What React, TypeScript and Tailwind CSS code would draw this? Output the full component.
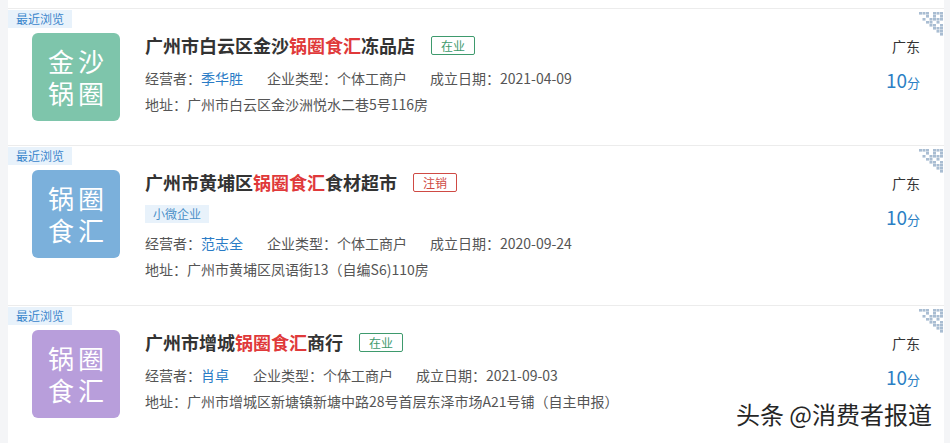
import React from 'react';

type Company = {
  logo: [string, string];
  logoColor: string;
  prefix: string;
  suffix: string;
  status: '在业' | '注销';
  tag?: string;
  owner: string;
  date: string;
  address: string;
  height: string;
};

const companies: Company[] = [
  {
    logo: ['金沙', '锅圈'],
    logoColor: 'bg-[#7ec5ab]',
    prefix: '广州市白云区金沙',
    suffix: '冻品店',
    status: '在业',
    owner: '季华胜',
    date: '2021-04-09',
    address: '地址：广州市白云区金沙洲悦水二巷5号116房',
    height: 'h-[137px]',
  },
  {
    logo: ['锅圈', '食汇'],
    logoColor: 'bg-[#7bb0db]',
    prefix: '广州市黄埔区',
    suffix: '食材超市',
    status: '注销',
    tag: '小微企业',
    owner: '范志全',
    date: '2020-09-24',
    address: '地址：广州市黄埔区凤语街13（自编S6)110房',
    height: 'h-[160px]',
  },
  {
    logo: ['锅圈', '食汇'],
    logoColor: 'bg-[#b89edb]',
    prefix: '广州市增城',
    suffix: '商行',
    status: '在业',
    owner: '肖卓',
    date: '2021-09-03',
    address: '地址：广州市增城区新塘镇新塘中路28号首层东泽市场A21号铺（自主申报）',
    height: 'h-[140px]',
  },
];

// little pixel triangle in the card corner (qr code hint)
const QrCorner: React.FC = () => {
  const cells: [number, number][] = [];
  const pattern = [
    '1110111',
    '0010101',
    '0101111',
    '0011010',
    '0001101',
    '0000111',
    '0000011',
    '0000001',
  ];
  pattern.forEach((row, y) =>
    row.split('').forEach((c, x) => {
      if (c === '1') cells.push([x, y]);
    })
  );
  return (
    <svg width="26" height="26" viewBox="0 0 26 26" className="absolute right-0 top-[2px]">
      {cells.map(([x, y], i) => (
        <rect key={i} x={x * 3.5 + 1} y={y * 3 + 1} width="3" height="2.6" fill="#a9bdd2" />
      ))}
    </svg>
  );
};

const Card: React.FC<{ c: Company; last?: boolean }> = ({ c, last }) => (
  <div className={`relative border-t border-[#ececec] bg-white ${c.height}`}>
    <QrCorner />
    <div className="mt-[1px] h-[18px] w-fit bg-[#e8f2fb] px-[8px] text-[12px] leading-[18px] text-[#3a86cc]">
      最近浏览
    </div>
    <div className="mt-[5px] flex">
      <div
        className={`ml-[24px] flex h-[88px] w-[88px] shrink-0 flex-col items-center justify-center rounded-[6px] ${c.logoColor} text-[26px] leading-[32px] tracking-[4px] text-white`}
      >
        <span className="pl-[4px]">{c.logo[0]}</span>
        <span className="pl-[4px]">{c.logo[1]}</span>
      </div>
      <div className="ml-[25px] flex-1">
        <div className="flex items-center">
          <span className="text-[18px] font-bold leading-[24px] text-[#333]">
            {c.prefix}
            <span className="text-[#e0393a]">锅圈食汇</span>
            {c.suffix}
          </span>
          <span
            className={`ml-[16px] h-[19px] rounded-[2px] border px-[9px] text-[12px] leading-[17px] ${
              c.status === '在业' ? 'border-[#3e9a6d] text-[#3e9a6d]' : 'border-[#cf4a44] text-[#cf4a44]'
            }`}
          >
            {c.status}
          </span>
        </div>
        {c.tag && (
          <div className="mt-[11px] h-[18px] w-fit bg-[#e8f2fb] px-[8px] text-[12px] leading-[18px] text-[#4a8fc8]">
            {c.tag}
          </div>
        )}
        <div className={`${c.tag ? 'mt-[10px]' : 'mt-[11px]'} flex text-[14px] leading-[20px] text-[#555]`}>
          <span className="mr-[24px]">
            经营者：<span className="text-[#2a7cc6]">{c.owner}</span>
          </span>
          <span className="mr-[23px]">企业类型：个体工商户</span>
          <span>成立日期：{c.date}</span>
        </div>
        <div className="mt-[6px] text-[14px] leading-[20px] text-[#555]">{c.address}</div>
      </div>
      <div className="mr-[24px] flex flex-col items-end pt-[3px]">
        <span className="text-[14px] leading-[20px] text-[#333]">广东</span>
        <span className="mt-[12px] leading-[24px] text-[#2b7fc4]">
          <span className="text-[19px]">10</span>
          <span className="text-[13px]">分</span>
        </span>
      </div>
    </div>
    {last && (
      <div className="absolute bottom-[16px] right-[12px] text-[24px] leading-[30px] text-[#262626] [text-shadow:0_0_2px_#fff,0_0_2px_#fff,1px_1px_0_#fff,-1px_-1px_0_#fff]">
        头条 @消费者报道
      </div>
    )}
  </div>
);

export default function App() {
  return (
    <div
      className="flex h-[443px] w-[950px] overflow-hidden bg-[#f4f5f7]"
      style={{ fontFamily: '"Noto Sans CJK SC", "Noto Sans", sans-serif' }}
    >
      <div className="ml-[8px] w-[936px] bg-white pt-[8px]">
        {companies.map((c, i) => (
          <Card key={i} c={c} last={i === companies.length - 1} />
        ))}
      </div>
    </div>
  );
}
